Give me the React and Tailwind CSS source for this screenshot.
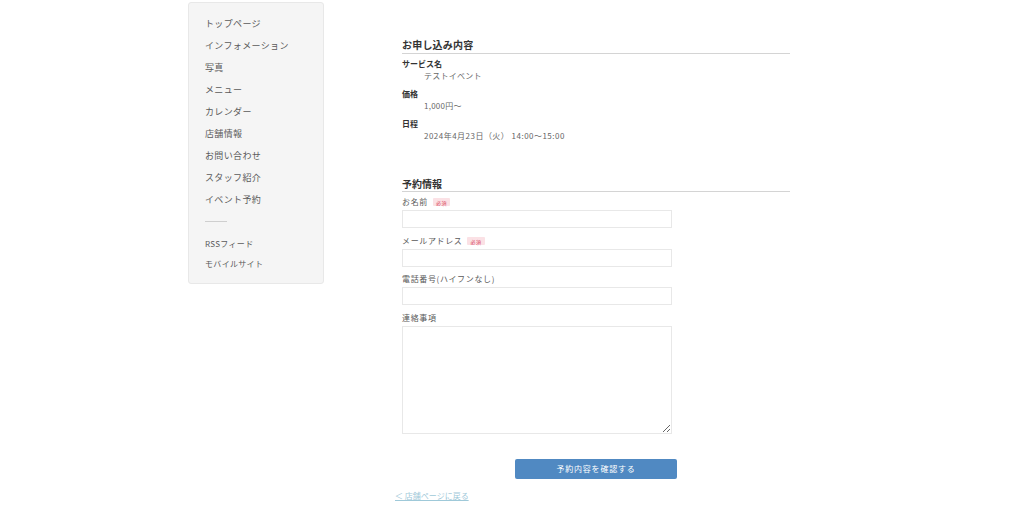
export default function App() {
  const font = { fontFamily: '"Noto Sans CJK JP", "Noto Sans", sans-serif' };
  const menu = ["トップページ", "インフォメーション", "写真", "メニュー", "カレンダー", "店舗情報", "お問い合わせ", "スタッフ紹介", "イベント予約"];
  const Badge = () => (
    <span className="ml-[5px] inline-flex h-[8px] items-center rounded-[1px] bg-[#fbe1e5] px-[3px] text-[5px] leading-none text-[#d9485f]">必須</span>
  );
  const Label = ({ children, req }) => (
    <div className="flex h-[12px] items-center text-[8px] leading-[12px] tracking-[0.08em] text-[#5a5a5a]">
      {children}
      {req && <Badge />}
    </div>
  );
  return (
    <div className="h-[507px] w-full overflow-hidden bg-white" style={font}>
      <div className="flex pl-[188px]">
        <aside className="mt-[2px] h-[282px] w-[136px] shrink-0 rounded-[3px] border border-[#e8e8e8] bg-[#f5f5f5] pl-[16px] pt-[10px]">
          {menu.map((m) => (
            <div key={m} className="flex h-[22px] items-center text-[9px] tracking-[0.04em] text-[#5a5a5a]">{m}</div>
          ))}
          <div className="mt-[10px] h-px w-[22px] bg-[#cfcfcf]" />
          <div className="mt-[12px] flex h-[20px] items-center text-[8px] tracking-[0.04em] text-[#5a5a5a]">RSSフィード</div>
          <div className="flex h-[20px] items-center text-[8px] tracking-[0.04em] text-[#5a5a5a]">モバイルサイト</div>
        </aside>
        <main className="ml-[78px] w-[388px] shrink-0">
          <div className="mt-[38px] h-[16px] border-b border-[#d4d4d4] text-[10px] font-bold leading-[14px] tracking-[0.02em] text-[#333]">お申し込み内容</div>
          <div className="mt-[4px] text-[8px] font-bold leading-[12px] text-[#333]">サービス名</div>
          <div className="pl-[22px] text-[8px] leading-[12px] tracking-[0.03em] text-[#666]">テストイベント</div>
          <div className="mt-[6px] text-[8px] font-bold leading-[12px] text-[#333]">価格</div>
          <div className="pl-[22px] text-[8px] leading-[12px] tracking-[0.03em] text-[#666]">1,000円〜</div>
          <div className="mt-[6px] text-[8px] font-bold leading-[12px] text-[#333]">日程</div>
          <div className="pl-[22px] text-[8px] leading-[12px] tracking-[0.06em] text-[#666]">2024年4月23日（火） 14:00〜15:00</div>

          <div className="mt-[35px] h-[15px] border-b border-[#d4d4d4] text-[10px] font-bold leading-[14px] text-[#333]">予約情報</div>
          <div className="mt-[4px]"><Label req>お名前</Label></div>
          <div className="mt-[2px] h-[18px] w-[270px] border border-[#e8e8e8] bg-white" />
          <div className="mt-[7px]"><Label req>メールアドレス</Label></div>
          <div className="mt-[2px] h-[18px] w-[270px] border border-[#e8e8e8] bg-white" />
          <div className="mt-[6px]"><Label>電話番号(ハイフンなし)</Label></div>
          <div className="mt-[2px] h-[18px] w-[270px] border border-[#e8e8e8] bg-white" />
          <div className="mt-[7px]"><Label>連絡事項</Label></div>
          <textarea className="mt-[2px] block h-[108px] w-[270px] resize-y border border-[#e8e8e8] bg-white outline-none" />

          <div className="mt-[25px] flex justify-center">
            <button className="flex h-[20px] w-[162px] items-center justify-center rounded-[2px] bg-[#5089c2] text-[8px] tracking-[0.1em] text-white">予約内容を確認する</button>
          </div>
          <div className="ml-[-7px] mt-[11px] text-[8px] leading-[12px] tracking-[0] text-[#9fc9d9] underline">＜ 店舗ページに戻る</div>
        </main>
      </div>
    </div>
  );
}
